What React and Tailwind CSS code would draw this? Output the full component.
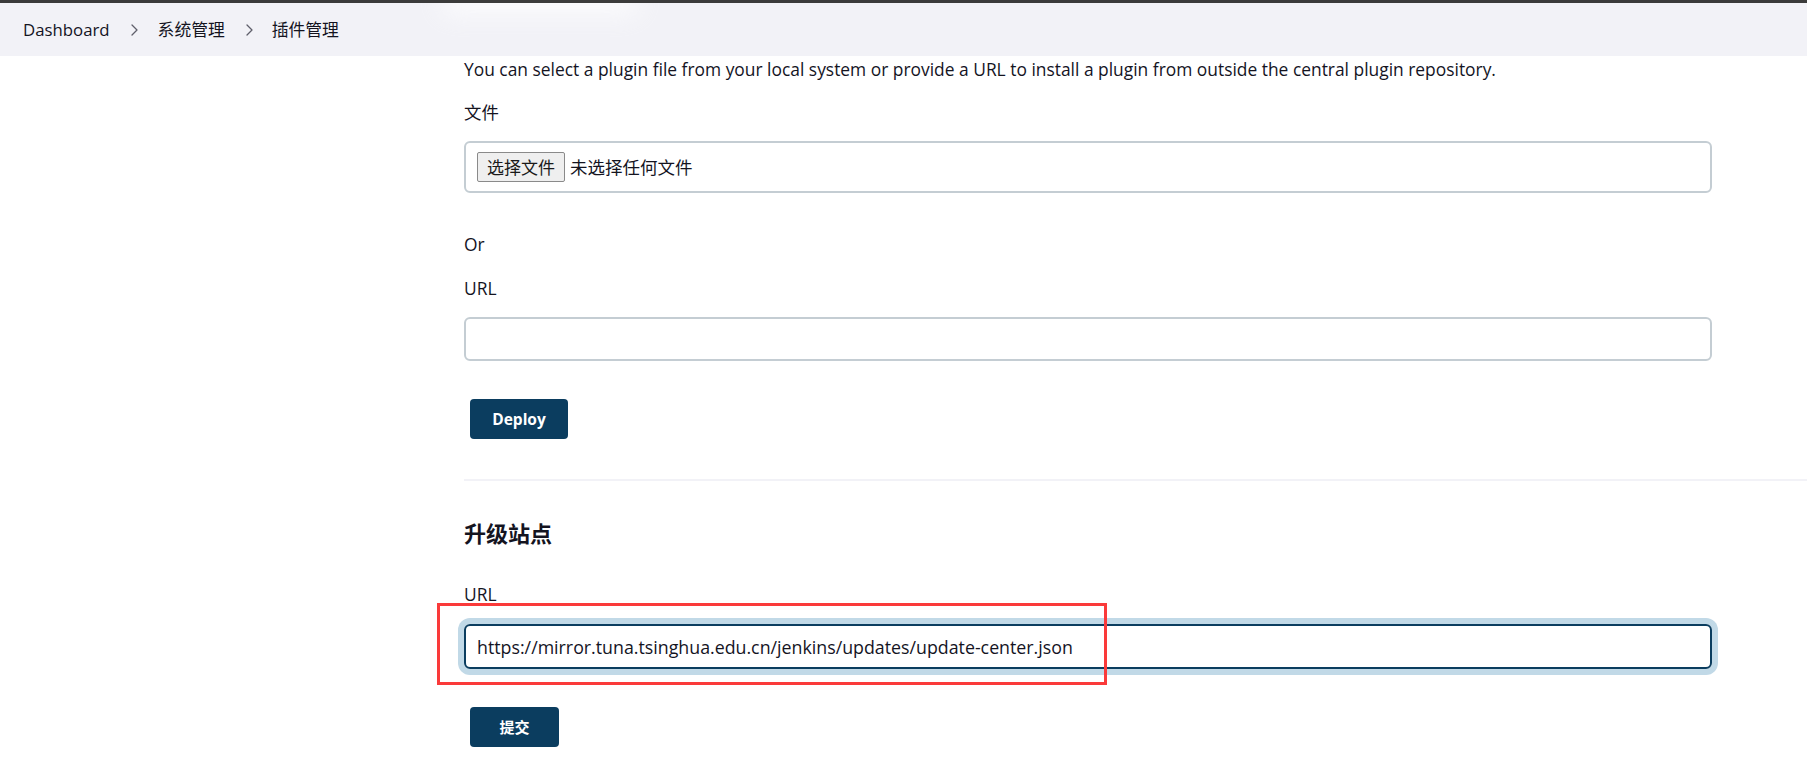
import { useState } from "react";

function Chevron() {
  return (
    <svg width="9" height="14" viewBox="0 0 9 14" className="shrink-0">
      <polyline
        points="2,2 7,7 2,12"
        fill="none"
        stroke="#5f5f6b"
        strokeWidth="1.3"
        strokeLinecap="round"
        strokeLinejoin="round"
      />
    </svg>
  );
}

function Breadcrumbs() {
  return (
    <div className="relative h-[53px] bg-[#f2f2f7] flex items-center pl-[23px] text-[16.8px] text-[#14141f] overflow-hidden">
      <div className="absolute left-[440px] top-[-14px] w-[200px] h-[26px] rounded-full bg-white opacity-70 blur-md" />
      <span className="relative">Dashboard</span>
      <span className="relative ml-[20px] mr-[19px]">
        <Chevron />
      </span>
      <span className="relative">系统管理</span>
      <span className="relative ml-[20px] mr-[18px]">
        <Chevron />
      </span>
      <span className="relative">插件管理</span>
    </div>
  );
}

export default function App() {
  const [url, setUrl] = useState("");
  const [site, setSite] = useState(
    "https://mirror.tuna.tsinghua.edu.cn/jenkins/updates/update-center.json"
  );

  return (
    <div className="min-h-[758px] bg-white font-['Open_Sans','Noto_Sans_CJK_SC',sans-serif] text-[#14141f]">
      <div className="h-[3px] bg-[#3b3b3b]" />
      <Breadcrumbs />
      <div className="flex">
        <div className="w-[464px] shrink-0" />
        <div className="flex-1 flex flex-col text-[17.4px] leading-[26px]">
          <p>
            You can select a plugin file from your local system or provide a URL to install a plugin from outside the central plugin repository.
          </p>
          <label className="mt-[17px]">文件</label>
          <div className="mt-[16px] w-[1248px] h-[52px] border-2 border-[#c4cdd3] rounded-[6px] flex items-center pl-[11px]">
            <button className="h-[30px] px-[9px] bg-[#efefef] border border-[#8a8a8a] rounded-[2px] text-[17px] leading-none text-[#1a1a1a]">
              选择文件
            </button>
            <span className="ml-[5px] text-[17.5px]">未选择任何文件</span>
          </div>
          <div className="mt-[38px]">Or</div>
          <label className="mt-[18px]">URL</label>
          <input
            value={url}
            onChange={(e) => setUrl(e.target.value)}
            className="mt-[16px] w-[1248px] h-[44px] border-2 border-[#c4cdd3] rounded-[6px] px-[10px] outline-none"
          />
          <button className="mt-[38px] ml-[6px] w-[98px] h-[40px] rounded-[4px] bg-[#0b3d5f] text-white font-bold text-[15.5px]">
            Deploy
          </button>
          <div className="mt-[40px] h-[2px] bg-[#f2f2f7]" />
          <h2 className="mt-[38px] text-[22px] leading-[28px] font-bold">升级站点</h2>
          <div className="relative mt-[34px] flex flex-col">
            <label>URL</label>
            <input
              value={site}
              onChange={(e) => setSite(e.target.value)}
              className="mt-[17px] w-[1248px] h-[45px] border-2 border-[#0b3d5f] rounded-[6px] px-[11px] text-[17.8px] outline-none shadow-[0_0_0_6px_#c1d9e7]"
            />
            <div className="absolute left-[-27px] top-[22px] w-[670px] h-[82px] border-[3px] border-[#fa3a3a] pointer-events-none" />
          </div>
          <button className="mt-[38px] ml-[6px] w-[89px] h-[40px] rounded-[4px] bg-[#0b3d5f] text-white font-bold text-[15px]">
            提交
          </button>
          <div className="h-[12px]" />
        </div>
      </div>
    </div>
  );
}
